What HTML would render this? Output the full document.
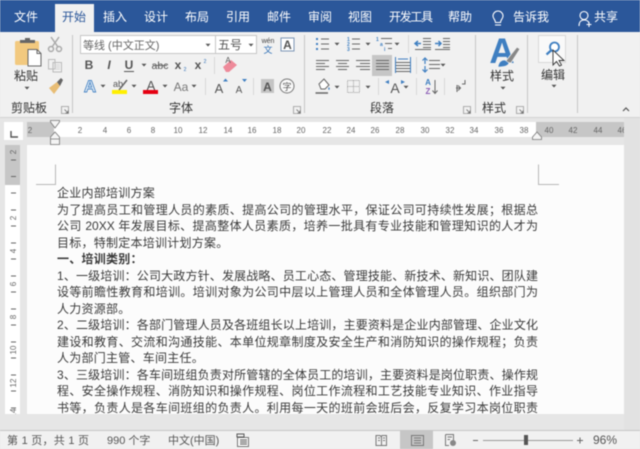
<!DOCTYPE html>
<html lang="zh"><head><meta charset="utf-8"><title>Word</title>
<style>
html,body{margin:0;padding:0;width:640px;height:449px;overflow:hidden;background:#e6e6e6}
#w{position:relative;width:640px;height:449px;overflow:hidden;filter:blur(.4px);font-family:"Liberation Sans","Noto Sans CJK SC",sans-serif}
.a{position:absolute}
#doc{left:57px;top:185px;width:481px;height:229px;overflow:hidden;font:12px/16.5px "Liberation Sans","Noto Sans CJK SC",sans-serif;color:#3a3a3a;letter-spacing:.25px}
#doc div{white-space:nowrap;height:16.5px}
#doc .j{text-align:justify;text-align-last:justify;white-space:normal;overflow:hidden;letter-spacing:0}
svg{position:absolute;left:0;top:0}
svg text{font-family:"Liberation Sans","Noto Sans CJK SC",sans-serif}
</style></head><body><div id="w">
<div class="a" style="left:0;top:0;width:640px;height:32px;background:#2b579a"></div>
<div class="a" style="left:0;top:32px;width:640px;height:85px;background:#f1f1f1;border-bottom:1px solid #d2d2d2"></div>
<div class="a" style="left:55px;top:4px;width:39px;height:29px;background:#f1f1f1"></div>
<div class="a" style="left:27px;top:122px;width:597px;height:15px;background:#fff"></div>
<div class="a" style="left:27px;top:122px;width:27px;height:15px;background:#c6c6c6"></div>
<div class="a" style="left:536px;top:122px;width:88px;height:15px;background:#c6c6c6"></div>
<div class="a" style="left:4px;top:122px;width:19px;height:18px;background:#fff"></div>
<div class="a" style="left:5px;top:145px;width:15px;height:269px;background:#fff"></div>
<div class="a" style="left:5px;top:145px;width:15px;height:40px;background:#c6c6c6"></div>
<div class="a" style="left:27px;top:145px;width:597px;height:269px;background:#fcfcfc"></div>
<div class="a" style="left:624px;top:118px;width:16px;height:312px;background:#e2e2e2"></div>
<div class="a" style="left:0;top:430px;width:640px;height:19px;background:#f1f1f1;border-top:1px solid #c6c6c6;box-sizing:border-box"></div>
<div class="a" style="left:400px;top:431px;width:33px;height:18px;background:#c6c6c6"></div>
<div class="a" style="left:372px;top:55px;width:20px;height:21px;background:#c6c6c6"></div>
<div class="a" style="left:80px;top:35px;width:177px;height:19px;background:#fff;border:1px solid #c6c6c6;box-sizing:border-box"></div>
<div class="a" style="left:215px;top:35px;width:1px;height:19px;background:#c6c6c6"></div>
<div class="a" style="left:538px;top:35px;width:28px;height:28px;background:#f9f9f9;border:1px solid #d8d8d8;box-sizing:border-box"></div>

<div id="doc" class="a">
<div>企业内部培训方案</div>
<div class="j">为了提高员工和管理人员的素质、提高公司的管理水平，保证公司可持续性发展；根据总</div>
<div class="j">公司 20XX 年发展目标、提高整体人员素质，培养一批具有专业技能和管理知识的人才为</div>
<div>目标，特制定本培训计划方案。</div>
<div style="font-weight:bold">一、培训类别：</div>
<div class="j">1、一级培训：公司大政方针、发展战略、员工心态、管理技能、新技术、新知识、团队建</div>
<div class="j">设等前瞻性教育和培训。培训对象为公司中层以上管理人员和全体管理人员。组织部门为</div>
<div>人力资源部。</div>
<div class="j">2、二级培训：各部门管理人员及各班组长以上培训，主要资料是企业内部管理、企业文化</div>
<div class="j">建设和教育、交流和沟通技能、本单位规章制度及安全生产和消防知识的操作规程；负责</div>
<div>人为部门主管、车间主任。</div>
<div class="j">3、三级培训：各车间班组负责对所管辖的全体员工的培训，主要资料是岗位职责、操作规</div>
<div class="j">程、安全操作规程、消防知识和操作规程、岗位工作流程和工艺技能专业知识、作业指导</div>
<div class="j">书等，负责人是各车间班组的负责人。利用每一天的班前会班后会，反复学习本岗位职责</div>
</div>

<svg width="640" height="449" viewBox="0 0 640 449">
<defs><path id="ar" d="M-2.5 -1.2H2.5L0 1.5Z" fill="#555"/>
<g id="lau"><path d="M-3.5 -3.5H3.5V3.5H-3.5Z" fill="none" stroke="#999" stroke-width=".8"/><path d="M-.5 -.5L3 3M3 .5V3H.5" fill="none" stroke="#666" stroke-width=".8"/></g></defs>

<!-- tabs -->
<g font-size="12" fill="#fff" text-anchor="middle">
<text x="26" y="21">文件</text>
<text x="74" y="21" fill="#2b579a">开始</text>
<text x="115" y="21">插入</text><text x="156" y="21">设计</text><text x="197" y="21">布局</text>
<text x="238" y="21">引用</text><text x="279" y="21">邮件</text><text x="320" y="21">审阅</text>
<text x="360" y="21">视图</text><text x="411" y="21" textLength="44">开发工具</text><text x="460" y="21">帮助</text>
<text x="531" y="21">告诉我</text><text x="606" y="21">共享</text></g>
<path d="M495 25h6M495.500 22.500h5c0-3 2.500-3.500 2.500-6.500a5 5 0 0 0-10 0c0 3 2.500 3.500 2.500 6.500Z" fill="none" stroke="#fff" stroke-width="1.100"/>
<path d="M579 26c0-4 2-6 5-6s4.500 1.500 5 3M584 19.500a4 4 0 1 0 0-8 4 4 0 0 0 0 8ZM589 22v5M586.500 24.500h5" fill="none" stroke="#fff" stroke-width="1.100"/>

<!-- separators -->
<g stroke="#c8c8c8" stroke-width="1.100"><path d="M72.500 35V113M304.500 35V113M475.500 35V113M527.500 35V113M577.500 35V113"/></g>
<g stroke="#d8d8d8"><path d="M214.500 57V74M205.500 78V95M253.500 78V95M408.500 35V53M416.500 57V74M378.500 78V95M416.500 78V95M444.500 78V95"/></g>

<!-- clipboard -->
<rect x="15" y="41" width="24" height="24" rx="1.500" fill="#f2c97f"/>
<path d="M20 43V40H25V38H30V40H35V43Z" fill="#666"/>
<path d="M28 49.500H37L41 53.500V66H28Z" fill="#fff" stroke="#666"/>
<path d="M37 49.500V53.500H41" fill="none" stroke="#666"/>
<g stroke="none"><circle cx="51" cy="49" r="2.500" fill="none" stroke="#aaa" stroke-width="1.500"/><circle cx="59" cy="49" r="2.500" fill="none" stroke="#aaa" stroke-width="1.500"/></g>
<path d="M52 47L59 37M58 47L51 37" stroke="#aaa" stroke-width="1.500" fill="none"/>
<path d="M48.500 59.500H55V69H48.500ZM53 62.500H61.500V72H53Z" fill="#f1f1f1" stroke="#bbb"/>
<path d="M54.500 65H60M54.500 67H60M54.500 69H60" stroke="#ccc" stroke-width=".8"/>
<path d="M49 88L57 82L60 86L54 94Z" fill="#e8bd75"/><path d="M57 82L61 78L63 80L60 86Z" fill="#666"/>
<g font-size="12" fill="#333" text-anchor="middle"><text x="26" y="80">粘贴</text><text x="29" y="112">剪贴板</text><text x="181" y="112">字体</text><text x="382" y="112">段落</text><text x="502" y="80">样式</text><text x="494" y="112">样式</text><text x="553" y="79">编辑</text></g>
<use href="#ar" x="27" y="88"/><use href="#ar" x="503" y="88"/><use href="#ar" x="554" y="86"/>
<use href="#lau" x="65" y="110"/><use href="#lau" x="297" y="110"/><use href="#lau" x="467" y="110"/><use href="#lau" x="520" y="110"/>

<!-- font row 1 -->
<text x="83" y="49" font-size="11" fill="#666">等线 (中文正文)</text>
<text x="218" y="49" font-size="12" fill="#555">五号</text>
<use href="#ar" x="208" y="45"/><use href="#ar" x="251" y="45"/>
<text x="268" y="43" font-size="7" fill="#444" text-anchor="middle">wén</text>
<text x="268" y="53" font-size="9" fill="#2f6fb5" text-anchor="middle">文</text>
<rect x="281" y="38" width="13" height="13" fill="#fff" stroke="#7b95b5"/>
<text x="287.500" y="49" font-size="12" font-weight="bold" fill="#555" text-anchor="middle">A</text>

<!-- font row 2 -->
<g fill="#555" font-size="12" text-anchor="middle">
<text x="89" y="69" font-weight="bold">B</text>
<text x="109" y="69" font-weight="bold" font-style="italic" font-family="Liberation Serif">I</text>
<text x="129" y="69" font-weight="bold">U</text>
<text x="160" y="69" font-size="10.500">abc</text>
<text x="178" y="69" font-weight="bold">x</text><text x="185" y="71" font-size="5" fill="#2f6fb5">2</text>
<text x="198" y="69" font-weight="bold">x</text><text x="205" y="63" font-size="5" fill="#2f6fb5">2</text>
</g>
<path d="M124 71.500H134" stroke="#555"/><path d="M153 65.500H167" stroke="#666"/>
<use href="#ar" x="144" y="65"/>
<path d="M223 67L231 60L237 65L229 72H226Z" fill="#ee8a9a"/>
<text x="228" y="63" font-size="8" fill="#555" text-anchor="middle">A</text>

<!-- font row 3 -->
<text x="90" y="92" font-size="17" font-weight="bold" fill="#e8f0f8" stroke="#4a86c5" stroke-width=".9" text-anchor="middle">A</text>
<use href="#ar" x="103" y="86"/>
<text x="118" y="87" font-size="9" fill="#555" text-anchor="middle">ab</text>
<path d="M119 90L127 80" stroke="#666" stroke-width="1.500"/>
<rect x="112" y="90" width="15" height="4" fill="#ffef00"/>
<use href="#ar" x="134" y="86"/>
<text x="151" y="90" font-size="13" fill="#555" text-anchor="middle">A</text>
<rect x="143" y="90" width="15" height="4" fill="#e60012"/>
<use href="#ar" x="165" y="86"/>
<text x="181" y="91" font-size="12" fill="#777" text-anchor="middle">Aa</text>
<use href="#ar" x="194" y="86"/>
<text x="219" y="93" font-size="13" fill="#555" text-anchor="middle">A</text><path d="M223 81.500h5l-2.500-3Z" fill="#3f7fc1"/>
<text x="239" y="93" font-size="10" fill="#555" text-anchor="middle">A</text><path d="M242 79h5l-2.500 3Z" fill="#3f7fc1"/>
<rect x="261" y="79" width="13" height="14" fill="#c4c4c4"/>
<text x="267.500" y="91" font-size="12" font-weight="bold" fill="#555" text-anchor="middle">A</text>
<circle cx="287" cy="86" r="7" fill="#fafafa" stroke="#777"/>
<text x="287" y="90" font-size="9" fill="#555" text-anchor="middle">字</text>

<!-- paragraph row 1 -->
<g fill="#3f7fc1"><rect x="316" y="38" width="2" height="2"/><rect x="316" y="43" width="2" height="2"/><rect x="316" y="48" width="2" height="2"/></g>
<path d="M321 39H329M321 44H329M321 49H329" stroke="#666"/>
<use href="#ar" x="337" y="44"/>
<g font-size="5" fill="#3f7fc1" font-weight="bold"><text x="347" y="41">1</text><text x="347" y="46">2</text><text x="347" y="51">3</text>
<text x="376" y="41">1</text><text x="380" y="46">a</text><text x="384" y="51">i</text></g>
<path d="M352 39H360M352 44H360M352 49H360" stroke="#666"/>
<path d="M381 38.500H392M385 43.500H392M388 48.500H392" stroke="#666"/>
<use href="#ar" x="368" y="44"/>
<use href="#ar" x="397" y="44"/>
<path d="M415 43.500H421M418 41L415 43.500L418 46" stroke="#3f7fc1" stroke-width="1.500" fill="none"/>
<path d="M423 38.500H431M423 41.500H431M423 44.500H431M423 47.500H431M415 49.500H431" stroke="#666" stroke-width=".9"/>
<path d="M435 43.500H441M438.500 41L441 43.500L438.500 46" stroke="#3f7fc1" stroke-width="1.500" fill="none"/>
<path d="M443 38.500H450M443 41.500H450M443 44.500H450M443 47.500H450M435 49.500H450" stroke="#666" stroke-width=".9"/>

<!-- row 2 -->
<g stroke="#666" fill="none">
<path d="M316 60.500H329M316 63.500H325M316 66.500H329M316 69.500H325"/>
<path d="M336 60.500H349M338 63.500H347M336 66.500H349M338 69.500H347"/>
<path d="M356 60.500H370M360 63.500H370M356 66.500H370M360 69.500H370"/>
<path d="M376 60.500H389M376 63.500H389M376 66.500H389M376 69.500H389"/>
<path d="M396 62.500H410M396 65.500H410M396 68.500H410M396 71.500H410"/>
<path d="M395.500 57V73M410.500 57V73" stroke="#3f7fc1"/>
<path d="M398 59H408" stroke="#3f7fc1"/>
<path d="M429 60.500H440M429 64.500H440M429 68.500H440"/>
</g>
<path d="M425 64V58.500M422.500 60.500L425 58L427.500 60.500M425 66V71.500M422.500 69.500L425 72L427.500 69.500" stroke="#3f7fc1" stroke-width="1.200" fill="none"/>
<use href="#ar" x="443" y="65"/>

<!-- row 3 -->
<path d="M319 84L324 79L329 85L325 89H321Z" fill="#fff" stroke="#666"/>
<path d="M315.500 93H328" stroke="#666" stroke-width="1.500"/><path d="M329 87q-1.500 2 0 3 1.500-1 0-3Z" fill="#3f7fc1"/>
<use href="#ar" x="337" y="87"/>
<path d="M347.500 80.500H359.500V92.500H347.500ZM353.500 80.500V92.500M347.500 86.500H359.500" stroke="#999" stroke-dasharray="1 1" fill="none"/>
<use href="#ar" x="368" y="87"/>
<text x="395" y="93" font-size="14" fill="#555" text-anchor="middle">A</text>
<path d="M385 82L389 80V84ZM405 82L401 80V84Z" fill="#3f7fc1"/>
<use href="#ar" x="406" y="87"/>
<text x="428" y="85" font-size="8" font-weight="bold" fill="#3f7fc1" text-anchor="middle">A</text>
<text x="428" y="94" font-size="8" font-weight="bold" fill="#8a5cb5" text-anchor="middle">Z</text>
<path d="M435 80V93M432.500 90.500L435 93.500L437.500 90.500" stroke="#666" fill="none"/>
<path d="M456 88H460M458 85.500L460.500 88L458 90.500M462 84H465V80" stroke="#666" fill="none"/>
<path d="M457 92V85" stroke="#666"/>

<!-- styles icon -->
<text x="502" y="63" font-size="35" font-weight="bold" fill="#3f7fc1" text-anchor="middle">A</text>
<path d="M505 62L517 47L520 49L511 63Z" fill="#888" stroke="#f1f1f1" stroke-width=".8"/>
<path d="M498 67q1-7 7-7l4 3q-1 4-11 4Z" fill="#3f7fc1" stroke="#f1f1f1" stroke-width=".6"/>
<!-- find icon -->
<circle cx="554.500" cy="47" r="4.500" fill="#fff" stroke="#3f7fc1" stroke-width="1.800"/>
<path d="M551 50.500L546.500 54.500" stroke="#3f7fc1" stroke-width="2.200"/>
<path d="M553 50V65L556.500 61.500L559.500 66L561.500 65L559 60.500H564Z" fill="#fff" stroke="#333" stroke-width=".9"/>
<path d="M623 111L626 108L629 111" stroke="#555" stroke-width="1.200" fill="none"/>

<!-- ruler -->
<path d="M11 131V137H18" stroke="#555" stroke-width="1.400" fill="none"/>
<g font-size="8" fill="#666" text-anchor="middle">
<text x="30" y="133">2</text><text x="80" y="133">2</text><text x="105" y="133">4</text><text x="129" y="133">6</text><text x="153" y="133">8</text><text x="178" y="133">10</text><text x="203" y="133">12</text><text x="228" y="133">14</text><text x="252" y="133">16</text><text x="277" y="133">18</text><text x="301" y="133">20</text><text x="327" y="133">22</text><text x="351" y="133">24</text><text x="375" y="133">26</text><text x="400" y="133">28</text><text x="425" y="133">30</text><text x="450" y="133">32</text><text x="474" y="133">34</text><text x="499" y="133">36</text><text x="524" y="133">38</text><text x="549" y="133">40</text><text x="573" y="133">42</text><text x="598" y="133">44</text><text x="622" y="133">46</text>
</g>
<rect x="624" y="122" width="16" height="15" fill="#e2e2e2"/>
<path d="M50.500 120.500H59.500V122L55 128L50.500 122Z" fill="#f4f4f4" stroke="#777" stroke-width=".8"/>
<path d="M55 132L59.500 137V144.500H50.500V137ZM50.500 139H59.500" fill="#f4f4f4" stroke="#777" stroke-width=".8"/>
<path d="M537 132L541.500 137V139.500H532.500V137Z" fill="#f4f4f4" stroke="#777" stroke-width=".8"/>
<!-- vertical ruler -->
<g fill="#666" font-size="8" text-anchor="middle">
<text transform="translate(16 152) rotate(-90)">2</text>
<text transform="translate(16 218) rotate(-90)">2</text>
<text transform="translate(16 251) rotate(-90)">4</text>
<text transform="translate(16 284) rotate(-90)">6</text>
<text transform="translate(16 317) rotate(-90)">8</text>
<text transform="translate(16 350) rotate(-90)">10</text>
<text transform="translate(16 383) rotate(-90)">12</text>
<text transform="translate(16 413) rotate(-90)">14</text>
</g>
<path d="M11 160H16M11 176.500H16M11 193H16M11 210H16M11 226H16M11 243H16M11 259H16M11 276H16M11 292H16M11 309H16M11 325H16M11 342H16M11 358H16M11 375H16M11 391H16M11 408H16" stroke="#666" stroke-width=".9"/>
<rect x="5" y="414" width="15" height="6" fill="#e6e6e6"/>
<!-- page corners -->
<path d="M36 184.500H55.500V164.500M538.500 164.500V184.500H559" stroke="#b8b8b8" fill="none"/>

<!-- status -->
<g font-size="11" fill="#555"><text x="7" y="444" textLength="82">第 1 页，共 1 页</text><text x="107" y="444">990 个字</text><text x="168" y="444">中文(中国)</text><text x="593" y="444" font-size="12">96%</text></g>
<path d="M237.500 437.500H248.500V446.500H237.500Z" fill="#fff" stroke="#777"/><path d="M237 434H244V437H237ZM240 440H247M240 442H247M240 444H247" stroke="#555" fill="none"/>
<path d="M376 435.500H380L381 436.500L382 435.500H386.500V445.500H376ZM381.500 436V446M378 438H380M378 440.500H380M383 438H385M383 440.500H385" fill="none" stroke="#777"/>
<path d="M411.500 435.500H423.500V445.500H411.500ZM414 438H421M414 440.500H421M414 443H421" fill="none" stroke="#777"/>
<path d="M445.500 434.500H453.500V442M445.500 434.500V445.500H449M447.500 437H452M447.500 439.500H450" fill="none" stroke="#777"/><circle cx="453" cy="443" r="3" fill="#888"/>
<path d="M473 440.500H478M577 440.500H583M580 437.500V443.500" stroke="#666"/>
<path d="M483 440.500H573" stroke="#999"/>
<rect x="524" y="435" width="4" height="10" fill="#555"/>
</svg>
</div></body></html>
